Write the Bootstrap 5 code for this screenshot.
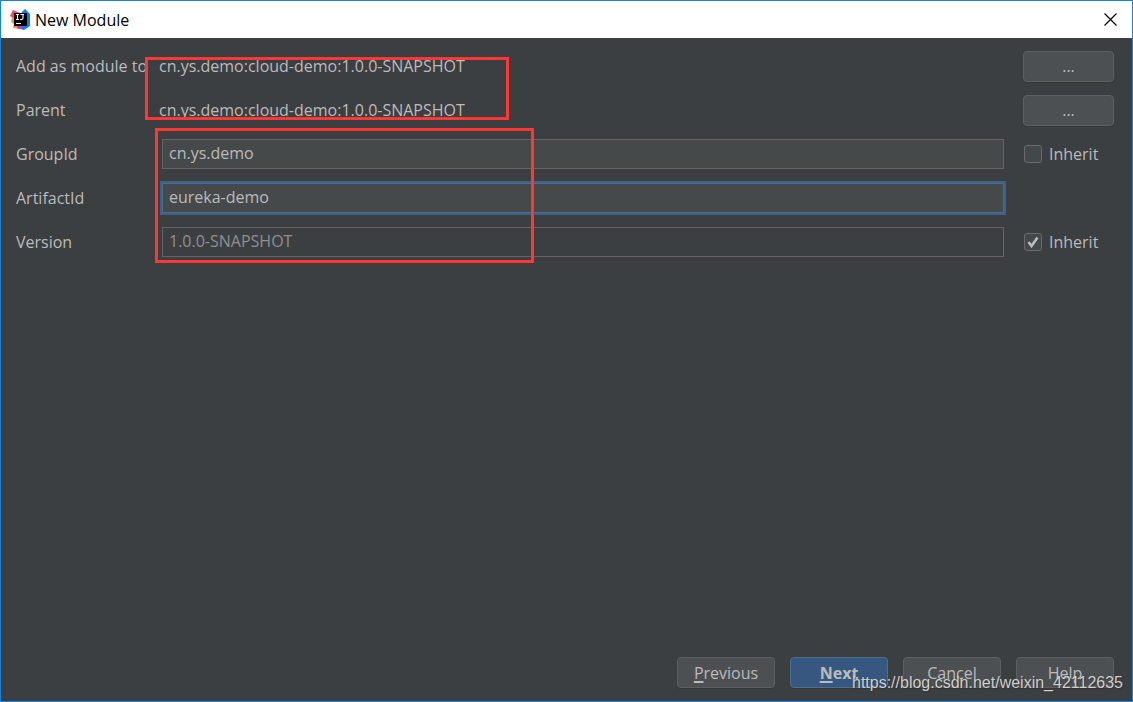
<!DOCTYPE html>
<html lang="en">
<head>
<meta charset="utf-8">
<meta name="viewport" content="width=device-width, initial-scale=1">
<title>New Module</title>
<link rel="stylesheet" href="https://cdn.jsdelivr.net/npm/bootstrap@5.3.0/dist/css/bootstrap.min.css">
<style>
  body { font-family: "Open Sans", "Noto Sans", sans-serif; font-size: 16px; line-height: 24px; }
  .dialog { background: #3c3f41; color: #bbb; border: 1px solid #1883d7; }
  .titlebar { background: #fff; color: #000; height: 37px; padding: 0 15px 0 9px; }
  .close-btn { line-height: 0; }
  .module-form { padding: 13px 18px 0 15px; }
  .form-rows { gap: 14px; }
  .form-line { height: 30px; }
  .name-col { width: 143px; white-space: nowrap; }
  .side-col { width: 91px; }
  .field-col { padding: 0 19px 0 3px; }
  .field { height: 30px; padding: 0 6px 2px; font-size: 16px; line-height: 24px; border: 1px solid #646464; border-radius: 0; background: #45494a; color: #bbb; }
  .field:focus, .field.active-field { background: #45494a; color: #bbb; border-color: #466d94; box-shadow: 0 0 0 2px #3d6185; outline: 0; }
  .field:disabled { background: #3c3f41; color: #8f8f8f; opacity: 1; }
  .ide-btn { height: 31px; padding: 0; font-size: 16px; line-height: 24px; color: #bbb; background: #4c5052; border: 1px solid #5e6060; border-radius: 4px; box-shadow: 0 1px 0 #353839; }
  .ide-btn:hover { color: #bbb; background: #55595b; border-color: #5e6060; }
  .ide-btn.primary { background: #365880; border-color: #4c708c; font-weight: 700; }
  .ide-btn u { text-underline-offset: 2px; text-decoration-thickness: 2px; }
  .footer-btn { width: 98px; }
  .footer-bar { gap: 15px; padding: 0 18px 13px; }
  .tick { width: 18px; height: 18px; margin: 0 7px 0 1px; background-color: #43494a; border: 1px solid #6b6b6b; flex: none; }
  .tick.form-check-input[type=checkbox] { border-radius: 3px; }
  .tick:checked { background-color: #43494a; border-color: #6b6b6b; background-size: 16px; }
  .tick.form-check-input:checked[type=checkbox] { background-image: url("data:image/svg+xml,%3Csvg xmlns='http://www.w3.org/2000/svg' viewBox='0 0 16 16'%3E%3Cpath d='M3.500 8l3 4L12.500 3.500' fill='none' stroke='%23bbb' stroke-width='2.6'/%3E%3C/svg%3E"); }
  .highlight { position: absolute; border: 3px solid #ff3835; pointer-events: none; }
  .highlight-parent { left: 144px; top: 19px; width: 364px; height: 63px; }
  .highlight-fields { left: 154px; top: 90px; width: 379px; height: 135px; }
  .watermark { position: absolute; right: 9px; bottom: 6px; font-family: "Liberation Sans", Arial, sans-serif; font-size: 16px; color: #dcdcdc; opacity: .9; text-shadow: 1px 1px 1px #333; pointer-events: none; }
</style>
</head>
<body>
<div class="dialog position-relative d-flex flex-column min-vh-100">
  <header class="titlebar d-flex align-items-center">
    <svg width="21" height="21" viewBox="0 0 21 21" aria-hidden="true">
      <path d="M3 1l7 3-2 11-6-2 1-4-3-2z" fill="#f7426d"/>
      <path d="M2 8l5-1 2 10 1 3-7-1 1-4-3-2z" fill="#f98a3b"/>
      <path d="M12 3l3-3 5 5v12l-6 4-7-2z" fill="#087cfa"/>
      <path d="M7 17l6 0-2 3-3-1z" fill="#bd3fbd"/>
      <path d="M4 4h13v13H4z" fill="#000"/>
      <path d="M6 5.500h3M7.500 5.500v5M6 10.500h3M10.500 5.500h3.500M13 5.500v3.500q0 1.500-1.500 1.500H10M6 14.500h5" fill="none" stroke="#fff" stroke-width="1.100"/>
    </svg>
    <span class="ps-1 flex-grow-1">New Module</span>
    <button type="button" class="close-btn btn p-0 border-0" aria-label="Close">
      <svg width="13" height="13" viewBox="0 0 13 13"><path d="M.5.5l12 12M12.500.5l-12 12" stroke="#000" stroke-width="1.200"/></svg>
    </button>
  </header>

  <main class="module-form position-relative flex-grow-1">
    <form class="form-rows d-flex flex-column">
      <div class="form-line d-flex align-items-center">
        <span class="name-col">Add as module to</span>
        <span class="flex-grow-1">cn.ys.demo:cloud-demo:1.0.0-SNAPSHOT</span>
        <button type="button" class="side-col btn ide-btn" aria-label="Choose module">...</button>
      </div>
      <div class="form-line d-flex align-items-center">
        <span class="name-col">Parent</span>
        <span class="flex-grow-1">cn.ys.demo:cloud-demo:1.0.0-SNAPSHOT</span>
        <button type="button" class="side-col btn ide-btn" aria-label="Choose parent">...</button>
      </div>
      <div class="form-line d-flex align-items-center">
        <label class="name-col" for="groupId">GroupId</label>
        <div class="field-col flex-grow-1"><input class="form-control field" id="groupId" type="text" value="cn.ys.demo"></div>
        <div class="side-col d-flex align-items-center">
          <input class="form-check-input tick" type="checkbox" id="inheritGroup"><label for="inheritGroup">Inherit</label>
        </div>
      </div>
      <div class="form-line d-flex align-items-center">
        <label class="name-col" for="artifactId">ArtifactId</label>
        <div class="field-col flex-grow-1"><input class="form-control field active-field" id="artifactId" type="text" value="eureka-demo"></div>
        <div class="side-col"></div>
      </div>
      <div class="form-line d-flex align-items-center">
        <label class="name-col" for="version">Version</label>
        <div class="field-col flex-grow-1"><input class="form-control field" id="version" type="text" value="1.0.0-SNAPSHOT" disabled></div>
        <div class="side-col d-flex align-items-center">
          <input class="form-check-input tick" type="checkbox" id="inheritVersion" checked><label for="inheritVersion">Inherit</label>
        </div>
      </div>
    </form>
    <div class="highlight highlight-parent"></div>
    <div class="highlight highlight-fields"></div>
  </main>

  <footer class="footer-bar d-flex justify-content-end">
    <button type="button" class="btn ide-btn footer-btn"><u>P</u>revious</button>
    <button type="button" class="btn ide-btn footer-btn primary"><u>N</u>ext</button>
    <button type="button" class="btn ide-btn footer-btn">Cancel</button>
    <button type="button" class="btn ide-btn footer-btn">Help</button>
  </footer>
  <div class="watermark">https://blog.csdn.net/weixin_42112635</div>
</div>
<script src="https://cdn.jsdelivr.net/npm/bootstrap@5.3.0/dist/js/bootstrap.bundle.min.js"></script>
</body>
</html>
